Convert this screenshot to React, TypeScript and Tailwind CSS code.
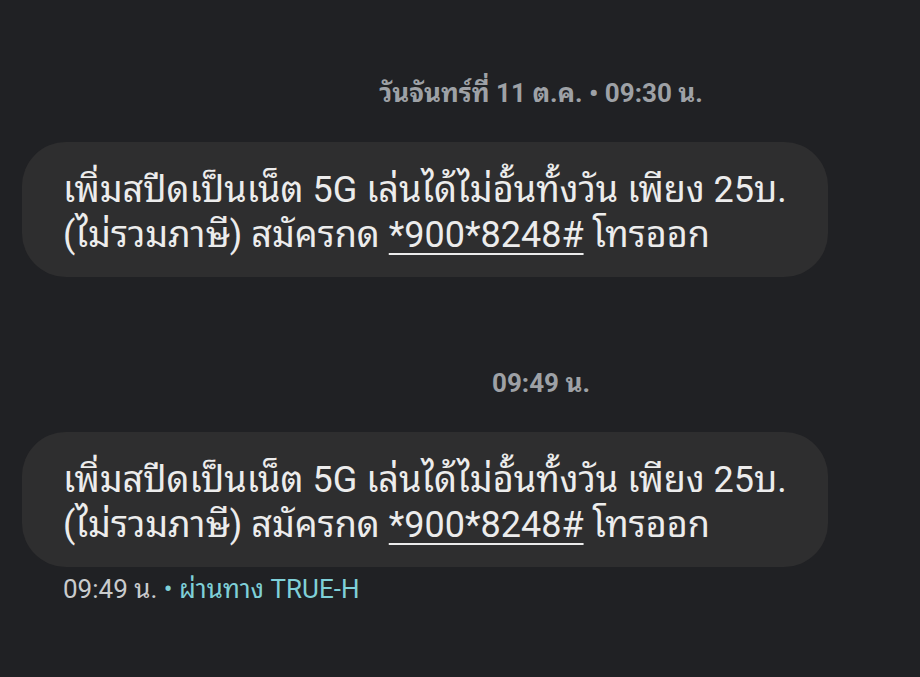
import React from 'react'

function Bubble() {
    return (
        <div className="mx-[22px] w-[806px] h-[135px] rounded-[44px] bg-[#2e2e2f] pl-[41px] pt-[26px] text-[36px] leading-[45px] text-[#ececec]">
            <div>เพิ่มสปีดเป็นเน็ต 5G เล่นได้ไม่อั้นทั้งวัน เพียง 25บ.</div>
            <div>
                (ไม่รวมภาษี) สมัครกด <span className="underline underline-offset-[6px] decoration-2">*900*8248#</span> โทรออก
            </div>
        </div>
    )
}

export default function App() {
    return (
        <div className="w-[920px] h-[677px] bg-[#202124] overflow-hidden font-[Roboto,'Noto_Sans_Thai_Looped','Noto_Sans_Thai',sans-serif]">
            <div className="pt-[78px] pl-[162px] flex justify-center">
                <span className="text-[26px] leading-[30px] font-bold text-[#9ea1a6]">วันจันทร์ที่ 11 ต.ค. • 09:30 น.</span>
            </div>
            <div className="mt-[34px]">
                <Bubble />
            </div>
            <div className="mt-[91px] pl-[162px] flex justify-center">
                <span className="text-[26px] leading-[30px] font-bold text-[#9ea1a6]">09:49 น.</span>
            </div>
            <div className="mt-[34px]">
                <Bubble />
            </div>
            <div className="pl-[63px] mt-[7px] text-[26px] leading-[30px]">
                <span className="text-[#c9cbcd]">09:49 น.</span>
                <span className="text-[#7fd0d8]"> • ผ่านทาง TRUE-H</span>
            </div>
        </div>
    )
}
